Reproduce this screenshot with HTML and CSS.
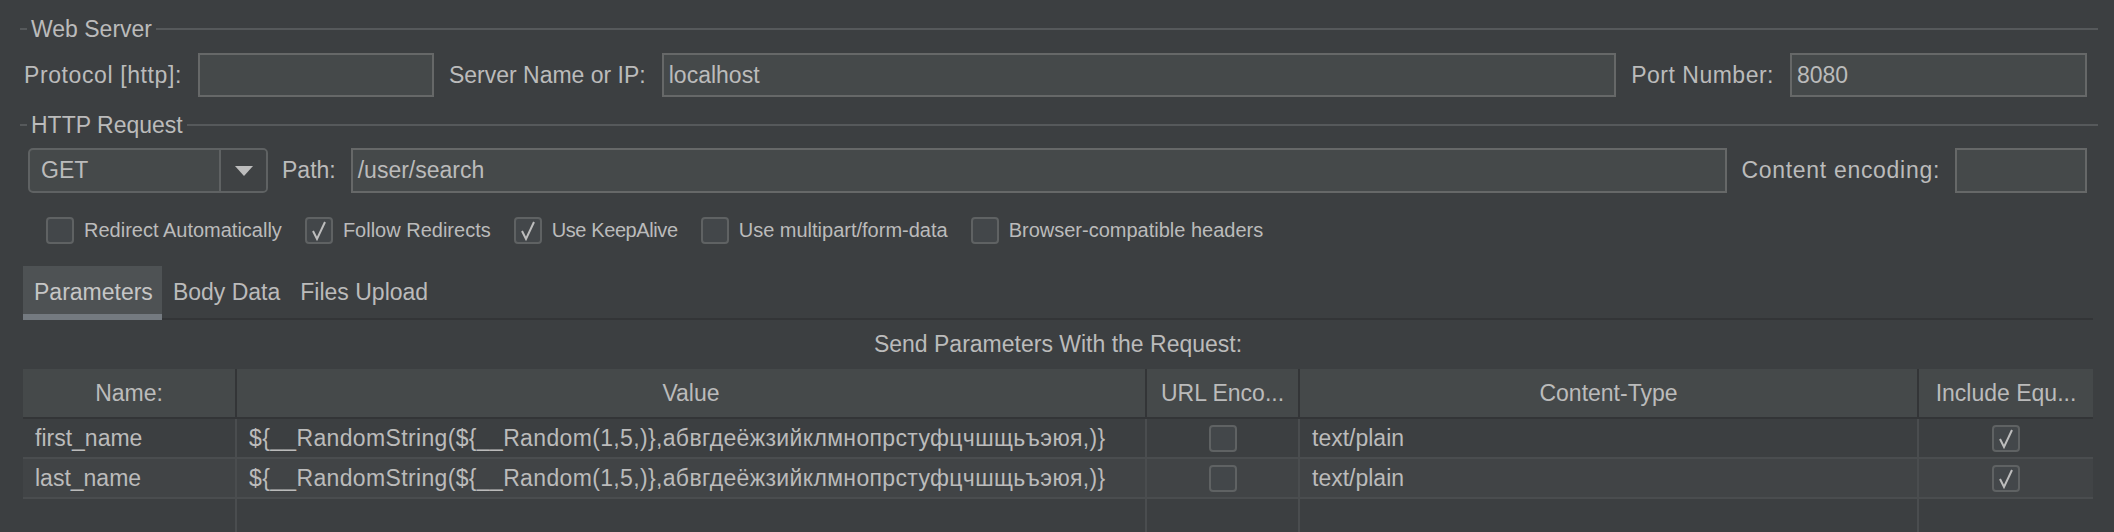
FILE: index.html
```html
<!DOCTYPE html>
<html>
<head>
<meta charset="utf-8">
<link rel="stylesheet" href="styles.css">
</head>
<body>
<div class="page">
  <section class="group">
    <div class="legend"><span class="lead"></span><span class="legend-text">Web Server</span><span class="rule"></span></div>
    <div class="row row-server">
      <label class="lbl lbl-protocol">Protocol [http]:</label>
      <div class="field w-protocol"></div>
      <label class="lbl">Server Name or IP:</label>
      <div class="field grow">localhost</div>
      <label class="lbl lbl-port">Port Number:</label>
      <div class="field w-port">8080</div>
    </div>
    <div class="legend legend-http"><span class="lead"></span><span class="legend-text">HTTP Request</span><span class="rule"></span></div>
    <div class="row row-request">
      <div class="combo">
        <span class="combo-value">GET</span>
        <span class="combo-btn"><svg width="18" height="10" viewBox="0 0 18 10"><polygon points="0,0 18,0 9,10" fill="#bdbdbd"/></svg></span>
      </div>
      <label class="lbl">Path:</label>
      <div class="field grow">/user/search</div>
      <label class="lbl lbl-enc">Content encoding:</label>
      <div class="field w-enc"></div>
    </div>
    <div class="checks">
      <div class="check"><span class="box"></span><span class="check-label">Redirect Automatically</span></div>
      <div class="check"><span class="box"><svg width="24" height="23" viewBox="0 0 24 23"><polyline points="6,12 10,20 18,3" fill="none" stroke="#bdbdbd" stroke-width="2"/></svg></span><span class="check-label">Follow Redirects</span></div>
      <div class="check"><span class="box"><svg width="24" height="23" viewBox="0 0 24 23"><polyline points="6,12 10,20 18,3" fill="none" stroke="#bdbdbd" stroke-width="2"/></svg></span><span class="check-label narrow">Use KeepAlive</span></div>
      <div class="check"><span class="box"></span><span class="check-label">Use multipart/form-data</span></div>
      <div class="check"><span class="box"></span><span class="check-label">Browser-compatible headers</span></div>
    </div>
  </section>

  <section class="tabs-area">
    <div class="tabbar">
      <div class="tab active">Parameters</div>
      <div class="tab">Body Data</div>
      <div class="tab">Files Upload</div>
    </div>
    <div class="caption">Send Parameters With the Request:</div>
    <div class="table">
      <div class="th">Name:</div>
      <div class="th">Value</div>
      <div class="th">URL Enco...</div>
      <div class="th">Content-Type</div>
      <div class="th last">Include Equ...</div>

      <div class="td r1">first_name</div>
      <div class="td r1 wide">${__RandomString(${__Random(1,5,)},абвгдеёжзийклмнопрстуфцчшщьъэюя,)}</div>
      <div class="td r1 center"><span class="box"></span></div>
      <div class="td r1">text/plain</div>
      <div class="td r1 center last"><span class="box"><svg width="24" height="23" viewBox="0 0 24 23"><polyline points="6,12 10,20 18,3" fill="none" stroke="#bdbdbd" stroke-width="2"/></svg></span></div>

      <div class="td r2">last_name</div>
      <div class="td r2 wide">${__RandomString(${__Random(1,5,)},абвгдеёжзийклмнопрстуфцчшщьъэюя,)}</div>
      <div class="td r2 center"><span class="box"></span></div>
      <div class="td r2">text/plain</div>
      <div class="td r2 center last"><span class="box"><svg width="24" height="23" viewBox="0 0 24 23"><polyline points="6,12 10,20 18,3" fill="none" stroke="#bdbdbd" stroke-width="2"/></svg></span></div>

      <div class="tf"></div>
      <div class="tf"></div>
      <div class="tf"></div>
      <div class="tf"></div>
      <div class="tf last"></div>
    </div>
  </section>
</div>
</body>
</html>
```
FILE: styles.css
```css
* { box-sizing: border-box; }
html, body {
  margin: 0;
  padding: 0;
  background: #3c3f41;
}
body {
  width: 2114px;
  height: 532px;
  overflow: hidden;
  font-family: "Liberation Sans", Arial, sans-serif;
  font-size: 23px;
  color: #bbbbbb;
}
.page { display: flex; flex-direction: column; }

.group { padding: 0 16px 0 20px; }

.legend {
  display: flex;
  align-items: center;
  height: 24px;
  margin-top: 17px;
}
.legend-http { margin-top: 16px; }
.lead { width: 7px; height: 2px; background: #56595b; }
.rule { flex: 1; height: 2px; background: #56595b; }
.legend-text { padding: 0 4px 0 4px; line-height: 24px; white-space: nowrap; }

.row {
  display: flex;
  align-items: center;
  gap: 15px;
  padding-right: 11px;
}
.row-server { margin-top: 12px; height: 44px; padding-left: 4px; }
.row-request { margin-top: 11px; height: 45px; padding-left: 8px; gap: 14px; }

.lbl { white-space: nowrap; margin-right: 1px; }
.lbl-protocol { letter-spacing: 0.6px; }
.lbl-port { letter-spacing: 0.5px; }
.lbl-enc { letter-spacing: 0.7px; }

.field {
  height: 100%;
  border: 2px solid #666868;
  background: #45494a;
  display: flex;
  align-items: center;
  padding: 0 5px;
  white-space: nowrap;
}
.grow { flex: 1; }
.w-protocol { width: 236px; }
.w-port { width: 297px; }
.w-enc { width: 132px; }

.combo {
  width: 240px;
  height: 100%;
  border: 2px solid #5f6263;
  border-radius: 5px;
  background: #45494a;
  display: flex;
  align-items: stretch;
  overflow: hidden;
}
.combo-value { flex: 1; display: flex; align-items: center; padding-left: 11px; }
.combo-btn {
  width: 47px;
  border-left: 2px solid #5f6263;
  background: #3f4244;
  display: flex;
  align-items: center;
  justify-content: center;
}

.checks {
  display: flex;
  align-items: center;
  gap: 23px;
  margin-top: 24px;
  height: 27px;
  padding-left: 26px;
  font-size: 20px;
}
.check { display: flex; align-items: center; gap: 10px; white-space: nowrap; }
.check-label.narrow { letter-spacing: -0.4px; }
.box {
  width: 28px;
  height: 27px;
  border: 2px solid #5f6263;
  border-radius: 4px;
  background: #43474a;
  display: inline-flex;
  align-items: center;
  justify-content: center;
  flex: none;
}

.tabs-area { padding: 0 21px 0 23px; margin-top: 22px; }
.tabbar {
  display: flex;
  height: 54px;
  border-bottom: 2px solid #333537;
}
.tab {
  height: 54px;
  padding: 13px 9px 0 11px;
  white-space: nowrap;
  line-height: 27px;
}
.tab.active {
  background: #4e5254;
  border-bottom: 6px solid #747a80;
  color: #c6c6c6;
}

.caption {
  height: 51px;
  display: flex;
  align-items: center;
  justify-content: center;
  margin-top: -2px;
  padding-top: 2px;
}

.table {
  display: grid;
  grid-template-columns: 214px 910px 153px 619px 174px;
  grid-template-rows: 50px 40px 40px 40px;
}
.th {
  background: #45494a;
  border-right: 2px solid #333537;
  border-bottom: 2px solid #333537;
  display: flex;
  align-items: center;
  justify-content: center;
  white-space: nowrap;
}
.td {
  border-right: 2px solid #4a4d4f;
  border-bottom: 2px solid #4a4d4f;
  display: flex;
  align-items: center;
  padding-left: 12px;
  white-space: nowrap;
  overflow: hidden;
}
.td.wide { letter-spacing: 0.35px; }
.r1 { background: #3c3f41; }
.r2 { background: #414446; }
.td.center { justify-content: center; padding-left: 0; }
.tf {
  background: #3c3f41;
  border-right: 2px solid #4a4d4f;
}
.last { border-right: none; }
```
